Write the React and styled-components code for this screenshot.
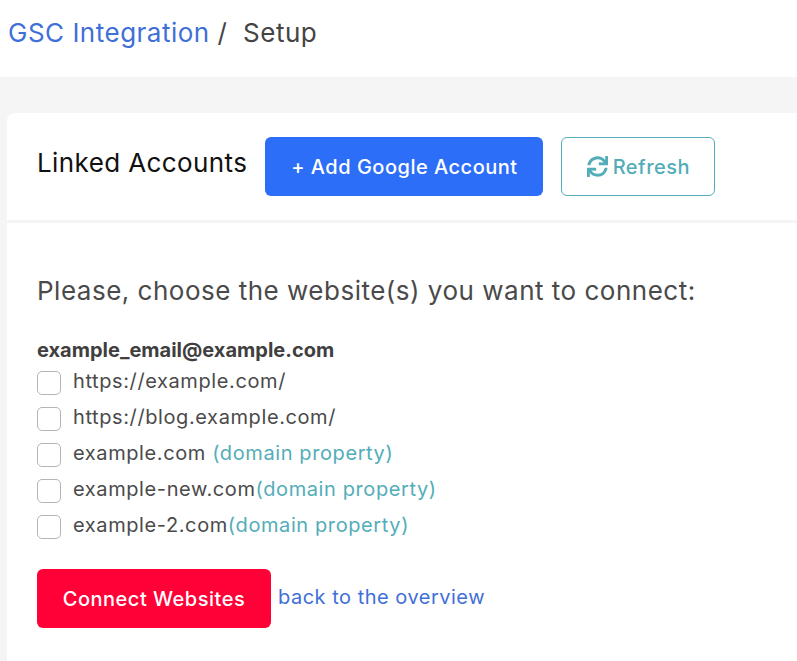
import React from "react";
import styled, { createGlobalStyle } from "styled-components";
import { FaSync } from "react-icons/fa";

const Global = createGlobalStyle`
  html, body { margin: 0; padding: 0; background: #f5f5f5; }
  body { font-family: Inter, "Liberation Sans", sans-serif; letter-spacing: 0.5px; }
`;
const Page = styled.div`
  width: 797px;
  height: 661px;
  overflow: hidden;
  background: #f5f5f5;
`;
const TopBar = styled.header`
  height: 77px;
  background: #fff;
  padding: 16px 0 0 8px;
  box-sizing: border-box;
  font-size: 26px;
  line-height: 34px;
  color: #444;
  display: flex;
  white-space: pre;
`;
const Crumb = styled.a`
  color: #3f6fd8;
  text-decoration: none;
`;
const Main = styled.main`
  padding: 36px 0 0 7px;
`;
const Card = styled.section`
  background: #fff;
  border-top-left-radius: 8px;
  height: 548px;
`;
const CardHead = styled.div`
  height: 110px;
  box-sizing: border-box;
  border-bottom: 3px solid #f5f5f5;
  padding: 24px 0 0 30px;
  display: flex;
  align-items: flex-start;
`;
const CardTitle = styled.h2`
  margin: 9px 18px 0 0;
  font-size: 26px;
  line-height: 34px;
  font-weight: 400;
  letter-spacing: 0.4px;
  color: #111;
`;
const Button = styled.button`
  height: 59px;
  box-sizing: border-box;
  border-radius: 6px;
  font-family: inherit;
  font-size: 20px;
  font-weight: 500;
  letter-spacing: 0.5px;
  display: inline-flex;
  align-items: center;
  justify-content: center;
  gap: 5px;
  padding: 0;
`;
const PrimaryButton = styled(Button)`
  width: 278px;
  background: #2c6ef8;
  border: 0;
  color: #fff;
`;
const OutlineButton = styled(Button)`
  width: 154px;
  margin-left: 18px;
  background: #fff;
  border: 1px solid #53adb8;
  color: #53adb8;
`;
const CardBody = styled.div`
  padding: 50px 0 0 30px;
`;
const Prompt = styled.p`
  margin: 0 0 29px;
  font-size: 26px;
  line-height: 36px;
  color: #4a4a4a;
`;
const Account = styled.div`
  font-weight: 700;
  font-size: 20px;
  line-height: 24px;
  letter-spacing: 0;
  color: #3f3f3f;
`;
const Sites = styled.ul`
  list-style: none;
  margin: 1px 0 0;
  padding: 0;
`;
const Site = styled.li`
  height: 36px;
  display: flex;
  align-items: center;
  font-size: 20px;
  letter-spacing: 0.6px;
  color: #4a4a4a;
`;
const Box = styled.span`
  width: 24px;
  height: 24px;
  box-sizing: border-box;
  border: 1px solid #b5b5b5;
  border-radius: 5px;
  background: #fff;
  margin: 4px 12px 0 0;
  flex: none;
`;
const Note = styled.span`
  color: #53adb8;
`;
const Actions = styled.div`
  display: flex;
  align-items: flex-start;
  margin-top: 26px;
`;
const DangerButton = styled(Button)`
  width: 234px;
  background: #ff0037;
  border: 0;
  color: #fff;
`;
const BackLink = styled.a`
  margin: 14px 0 0 7px;
  font-size: 20px;
  line-height: 28px;
  color: #3f6fd8;
  text-decoration: none;
`;

const sites = [
  ["https://example.com/"],
  ["https://blog.example.com/"],
  ["example.com ", "(domain property)"],
  ["example-new.com", "(domain property)"],
  ["example-2.com", "(domain property)"],
];

export default function App() {
  return (
    <Page>
      <Global />
      <TopBar>
        <Crumb href="#">GSC Integration</Crumb>
        <span> /  Setup</span>
      </TopBar>
      <Main>
        <Card>
          <CardHead>
            <CardTitle>Linked Accounts</CardTitle>
            <PrimaryButton>+ Add Google Account</PrimaryButton>
            <OutlineButton><FaSync size={21} />Refresh</OutlineButton>
          </CardHead>
          <CardBody>
            <Prompt>Please, choose the website(s) you want to connect:</Prompt>
            <Account>example_email@example.com</Account>
            <Sites>
              {sites.map(([name, note]) => (
                <Site key={name}>
                  <Box />
                  <span style={{ whiteSpace: "pre" }}>{name}{note && <Note>{note}</Note>}</span>
                </Site>
              ))}
            </Sites>
            <Actions>
              <DangerButton>Connect Websites</DangerButton>
              <BackLink href="#">back to the overview</BackLink>
            </Actions>
          </CardBody>
        </Card>
      </Main>
    </Page>
  );
}
